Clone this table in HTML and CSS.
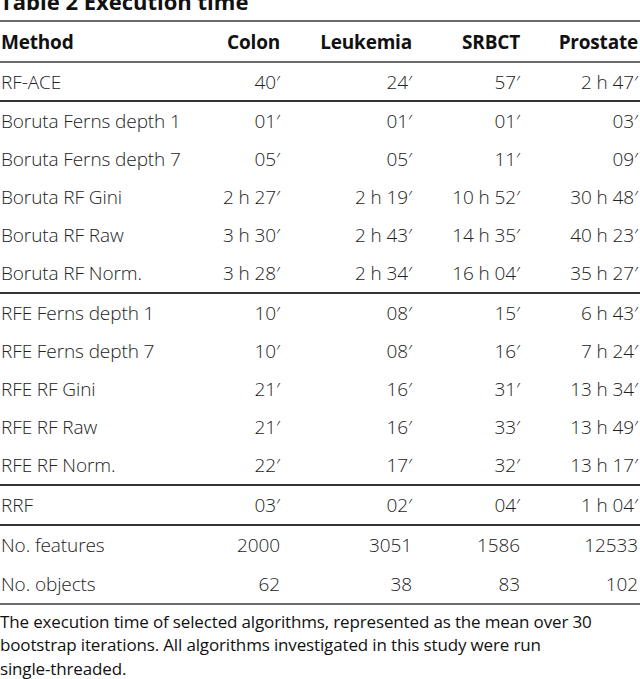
FILE: index.html
```html
<!DOCTYPE html>
<html>
<head>
<meta charset="utf-8">
<link rel="stylesheet" href="styles.css">
</head>
<body>
<div class="page">
  <h2 class="title">Table 2 Execution time</h2>
  <table class="tbl">
    <colgroup>
      <col class="c-method"><col class="c-colon"><col class="c-leuk"><col class="c-srbct"><col class="c-prost">
    </colgroup>
    <thead>
      <tr class="r-head"><th>Method</th><th>Colon</th><th>Leukemia</th><th>SRBCT</th><th>Prostate</th></tr>
    </thead>
    <tbody class="g-first">
      <tr class="r-a"><td>RF-ACE</td><td>40′</td><td>24′</td><td>57′</td><td>2 h 47′</td></tr>
    </tbody>
    <tbody class="g">
      <tr class="r-b"><td>Boruta Ferns depth 1</td><td>01′</td><td>01′</td><td>01′</td><td>03′</td></tr>
      <tr class="r-b"><td>Boruta Ferns depth 7</td><td>05′</td><td>05′</td><td>11′</td><td>09′</td></tr>
      <tr class="r-b"><td>Boruta RF Gini</td><td>2 h 27′</td><td>2 h 19′</td><td>10 h 52′</td><td>30 h 48′</td></tr>
      <tr class="r-b"><td>Boruta RF Raw</td><td>3 h 30′</td><td>2 h 43′</td><td>14 h 35′</td><td>40 h 23′</td></tr>
      <tr class="r-b"><td>Boruta RF Norm.</td><td>3 h 28′</td><td>2 h 34′</td><td>16 h 04′</td><td>35 h 27′</td></tr>
    </tbody>
    <tbody class="g">
      <tr class="r-b"><td>RFE Ferns depth 1</td><td>10′</td><td>08′</td><td>15′</td><td>6 h 43′</td></tr>
      <tr class="r-b"><td>RFE Ferns depth 7</td><td>10′</td><td>08′</td><td>16′</td><td>7 h 24′</td></tr>
      <tr class="r-b"><td>RFE RF Gini</td><td>21′</td><td>16′</td><td>31′</td><td>13 h 34′</td></tr>
      <tr class="r-b"><td>RFE RF Raw</td><td>21′</td><td>16′</td><td>33′</td><td>13 h 49′</td></tr>
      <tr class="r-b"><td>RFE RF Norm.</td><td>22′</td><td>17′</td><td>32′</td><td>13 h 17′</td></tr>
    </tbody>
    <tbody class="g">
      <tr class="r-c"><td>RRF</td><td>03′</td><td>02′</td><td>04′</td><td>1 h 04′</td></tr>
    </tbody>
    <tbody class="g g-last">
      <tr class="r-d"><td>No. features</td><td>2000</td><td>3051</td><td>1586</td><td>12533</td></tr>
      <tr class="r-d"><td>No. objects</td><td>62</td><td>38</td><td>83</td><td>102</td></tr>
    </tbody>
  </table>
  <p class="caption">The execution time of selected algorithms, represented as the mean over 30 bootstrap iterations. All algorithms investigated in this study were run <span class="nowrap">single-threaded.</span></p>
</div>
</body>
</html>
```

FILE: styles.css
```css
html, body {
  margin: 0;
  padding: 0;
  background: #ffffff;
}
body {
  font-family: "Open Sans", "Noto Sans", sans-serif;
  color: #1a1a1a;
  overflow: hidden;
}
.page {
  width: 640px;
  height: 679px;
  overflow: hidden;
}
.title {
  margin: -14px 0 0 0;
  height: 36px;
  font-size: 22px;
  font-weight: 700;
  line-height: 30px;
  letter-spacing: 0;
  color: #111;
  border-bottom: 2px solid #6b6b6b;
  box-sizing: border-box;
}
.tbl {
  width: 640px;
  border-collapse: collapse;
  table-layout: fixed;
  font-size: 19px;
}
.c-method { width: 200px; }
.c-colon { width: 80px; }
.c-leuk { width: 132px; }
.c-srbct { width: 108px; }
.c-prost { width: 120px; }
.tbl th, .tbl td {
  padding: 0;
  white-space: nowrap;
  text-align: right;
  vertical-align: middle;
}
.tbl th:first-child, .tbl td:first-child {
  text-align: left;
  padding-left: 1px;
}
.tbl th:last-child, .tbl td:last-child {
  padding-right: 2px;
}
.tbl th {
  font-weight: 700;
  color: #111;
  letter-spacing: -0.2px;
}
.tbl td {
  font-weight: 300;
  color: #222;
  letter-spacing: -0.1px;
}
.r-head { height: 40px; border-bottom: 2px solid #6b6b6b; }
.r-a { height: 39px; }
.r-b { height: 38.4px; }
.r-c { height: 40px; }
.r-d { height: 39.5px; }
.g { border-top: 2px solid #333; }
.g-last { border-bottom: 2px solid #6b6b6b; }
.caption {
  margin: 5px 0 0 0;
  font-size: 17px;
  line-height: 23.5px;
  color: #111;
  letter-spacing: -0.15px;
}
.nowrap { white-space: nowrap; }
```
